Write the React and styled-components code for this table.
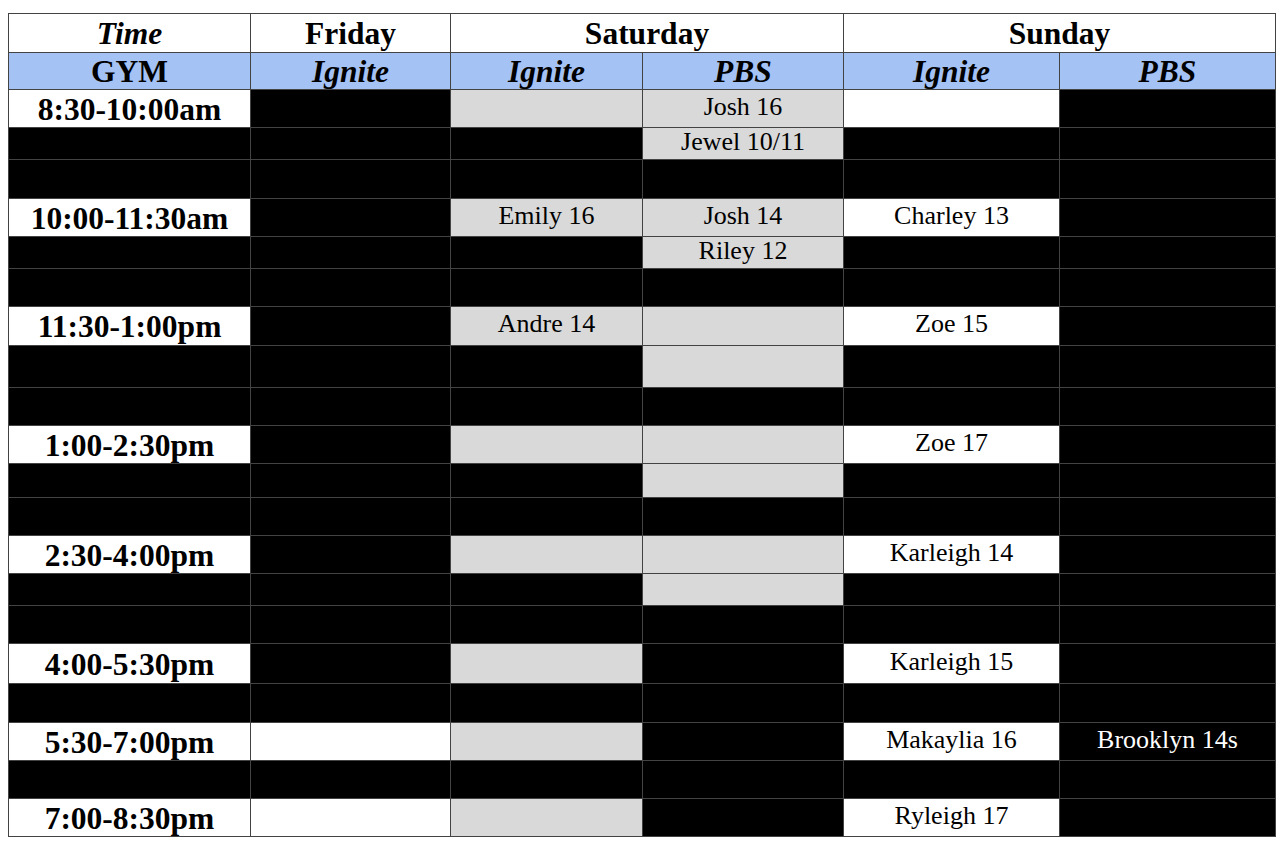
import React from 'react'
import styled, { createGlobalStyle } from 'styled-components'

const W = 'white'
const K = 'black'
const G = 'gray'

const rows = [
    { h: 38, time: '8:30-10:00am', cells: [K, G, [G, 'Josh 16'], W, K] },
    { h: 32, cells: [K, K, [G, 'Jewel 10/11'], K, K] },
    { h: 39, cells: [K, K, K, K, K] },
    { h: 38, time: '10:00-11:30am', cells: [K, [G, 'Emily 16'], [G, 'Josh 14'], [W, 'Charley 13'], K] },
    { h: 32, cells: [K, K, [G, 'Riley 12'], K, K] },
    { h: 38, cells: [K, K, K, K, K] },
    { h: 39, time: '11:30-1:00pm', cells: [K, [G, 'Andre 14'], G, [W, 'Zoe 15'], K] },
    { h: 42, cells: [K, K, G, K, K] },
    { h: 38, cells: [K, K, K, K, K] },
    { h: 38, time: '1:00-2:30pm', cells: [K, G, G, [W, 'Zoe 17'], K] },
    { h: 34, cells: [K, K, G, K, K] },
    { h: 38, cells: [K, K, K, K, K] },
    { h: 38, time: '2:30-4:00pm', cells: [K, G, G, [W, 'Karleigh 14'], K] },
    { h: 32, cells: [K, K, G, K, K] },
    { h: 38, cells: [K, K, K, K, K] },
    { h: 40, time: '4:00-5:30pm', cells: [K, G, K, [W, 'Karleigh 15'], K] },
    { h: 39, cells: [K, K, K, K, K] },
    { h: 38, time: '5:30-7:00pm', cells: [W, G, K, [W, 'Makaylia 16'], [K, 'Brooklyn 14s']] },
    { h: 38, cells: [K, K, K, K, K] },
    { h: 38, time: '7:00-8:30pm', cells: [W, G, K, [W, 'Ryleigh 17'], K] },
]

const colours = {
    white: '#ffffff',
    black: '#000000',
    gray: '#d9d9d9',
    blue: '#a4c2f4',
}

export default function App() {
    const template = [39, 37, ...rows.map(r => r.h)].map(h => `${h - 1}px`).join(' ')

    return (
        <>
            <GlobalStyle />
            <Sheet $rows={template}>
                <Cell $bold $italic>Time</Cell>
                <Cell $bold>Friday</Cell>
                <Cell $bold $span={2}>Saturday</Cell>
                <Cell $bold $span={2}>Sunday</Cell>

                <Cell $bg="blue" $bold>GYM</Cell>
                <Cell $bg="blue" $bold $italic>Ignite</Cell>
                <Cell $bg="blue" $bold $italic>Ignite</Cell>
                <Cell $bg="blue" $bold $italic>PBS</Cell>
                <Cell $bg="blue" $bold $italic>Ignite</Cell>
                <Cell $bg="blue" $bold $italic>PBS</Cell>

                {rows.map((row, i) => (
                    <React.Fragment key={i}>
                        {row.time
                            ? <Cell $bold>{row.time}</Cell>
                            : <Cell $bg="black" />}
                        {row.cells.map((c, j) => {
                            const [bg, text] = Array.isArray(c) ? c : [c, null]
                            return <Cell key={j} $bg={bg}>{text}</Cell>
                        })}
                    </React.Fragment>
                ))}
            </Sheet>
        </>
    )
}

const GlobalStyle = createGlobalStyle`
    html, body {
        margin: 0;
        background: #fff;
    }
    body {
        padding: 13px 8px;
        font-family: "Liberation Serif", "Times New Roman", serif;
    }
`

const Sheet = styled.div`
    display: grid;
    grid-template-columns: 241px 199px 191px 200px 215px 215px;
    grid-template-rows: ${p => p.$rows};
    gap: 1px;
    width: max-content;
    border: 1px solid #434343;
    background: #434343;
`

const Cell = styled.div`
    grid-column: span ${p => p.$span || 1};
    display: flex;
    align-items: center;
    justify-content: center;
    background: ${p => colours[p.$bg || 'white']};
    color: ${p => (p.$bg === 'black' ? '#fff' : '#000')};
    font-size: ${p => (p.$bold ? '31.5px' : '26px')};
    font-weight: ${p => (p.$bold ? 700 : 400)};
    font-style: ${p => (p.$italic ? 'italic' : 'normal')};
    white-space: nowrap;
    overflow: hidden;
    padding-top: ${p => (p.$bold ? '2px' : '0')};
    padding-bottom: ${p => (p.$bold ? '0' : '4px')};
`
